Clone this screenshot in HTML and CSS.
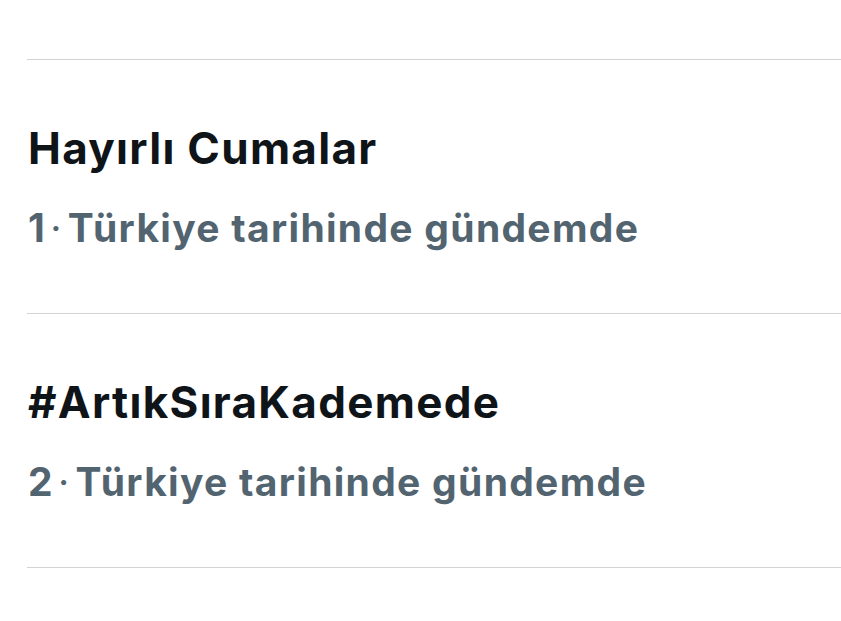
FILE: index.html
```html
<!DOCTYPE html>
<html lang="tr">
<head>
  <meta charset="UTF-8" />
  <meta name="viewport" content="width=device-width, initial-scale=1.0"/>
  <title>Gündem</title>
  <link rel="stylesheet" href="styles.css">
</head>
<body>

  <div class="trends">
    <div class="trend">
      <div class="trend-name">Hayırlı Cumalar</div>
      <div class="trend-meta">1<span class="sep">·</span>Türkiye tarihinde gündemde</div>
    </div>

    <div class="trend">
      <div class="trend-name">#ArtıkSıraKademede</div>
      <div class="trend-meta">2<span class="sep">·</span>Türkiye tarihinde gündemde</div>
    </div>
  </div>

</body>
</html>
```

FILE: styles.css
```css
body {
  font-family: Inter, "Liberation Sans", Arial, sans-serif;
  background-color: white;
  margin: 0;
  padding: 0;
}

.trends {
  margin-top: 59px;
  margin-left: 27px;
  border-bottom: 1px solid #d0d4d7;
}

.trend {
  border-top: 1px solid #d0d4d7;
  padding: 64px 0 61px 1px;
}

.trend-name {
  font-size: 44px;
  font-weight: bold;
  line-height: 48px;
  letter-spacing: 1.3px;
  color: #0f1419;
}

.trend-meta {
  margin-top: 32px;
  font-size: 39px;
  font-weight: bold;
  line-height: 48px;
  letter-spacing: 1.3px;
  color: #536471;
}

/* dot between rank and label */
.sep {
  margin: 0 5px 0 4px;
  font-weight: normal;
}
```
